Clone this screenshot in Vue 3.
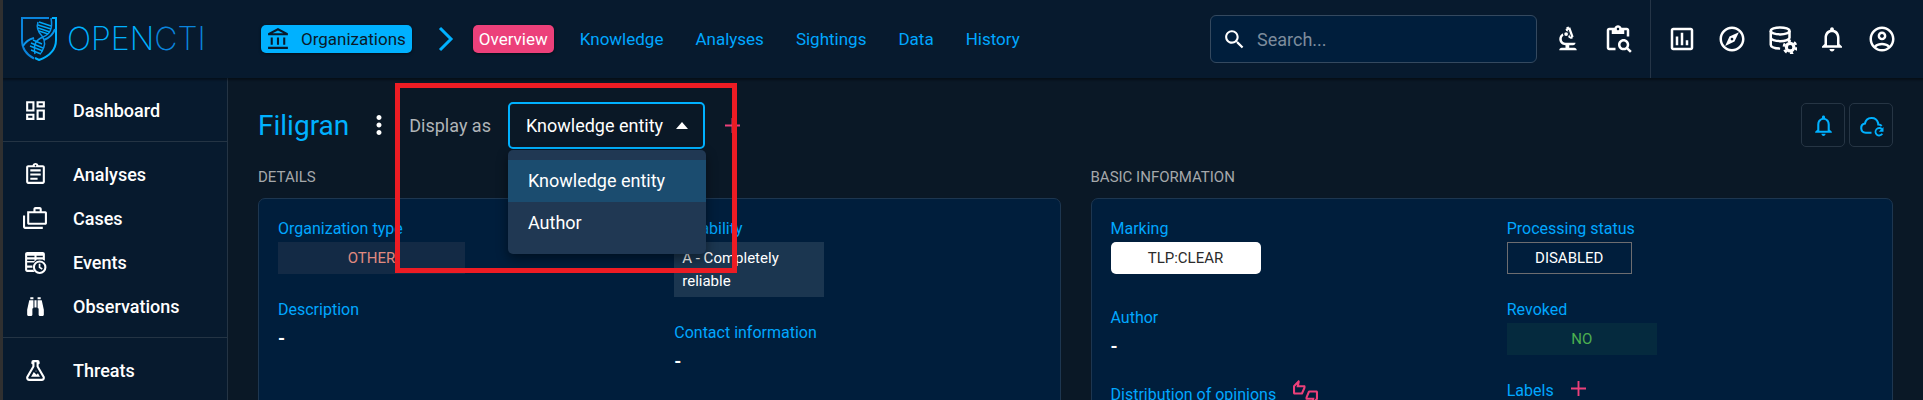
<script setup>
import { ref } from 'vue'

const tabs = ['Overview', 'Knowledge', 'Analyses', 'Sightings', 'Data', 'History']
const views = ['Knowledge entity', 'Author']
const view = ref('Knowledge entity')

const icons = {
  dashboard: 'M19 5v2h-4V5h4M9 5v6H5V5h4m10 8v6h-4v-6h4M9 17v2H5v-2h4M21 3h-8v6h8V3zM11 3H3v10h8V3zm10 8h-8v10h8V11zm-10 4H3v6h8v-6z',
  assignment: 'M7 15h7v2H7zm0-4h10v2H7zm0-4h10v2H7zm12-4h-4.18C14.4 1.84 13.3 1 12 1c-1.3 0-2.4.84-2.82 2H5c-1.1 0-2 .9-2 2v14c0 1.1.9 2 2 2h14c1.1 0 2-.9 2-2V5c0-1.1-.9-2-2-2zm-7-.25c.41 0 .75.34.75.75s-.34.75-.75.75-.75-.34-.75-.75.34-.75.75-.75zM19 19H5V5h14v14z',
  cases: 'M0 9h2v11h17v2H2c-1.1 0-2-.9-2-2V9zM21.500 5H18V3c0-1.100-.9-2-2-2h-4c-1.100 0-2 .9-2 2v2H4v11.500c0 .8.7 1.500 1.500 1.500h16c.8 0 1.500-.7 1.500-1.500v-10c0-.8-.7-1.500-1.500-1.500zM12 3h4v2h-4V3zm9 13H6V7h15v9z',
  events: 'M4 2h15c1.100 0 2 .9 2 2v6.300A7 7 0 0 0 19 9.300V9h-6v.6A7 7 0 0 0 10.500 12H4v3h5.100a7 7 0 0 0 0 2H4v2h5.700c.3.7.7 1.400 1.200 2H4c-1.100 0-2-.9-2-2V4c0-1.100.9-2 2-2zm0 3.500V7h7V5.500H4zm9 0V7h6V5.500h-6zM4 9v1.500h7V9H4zm12 1a6.500 6.500 0 1 1 0 13 6.500 6.500 0 0 1 0-13zm0 2a4.500 4.500 0 1 0 0 9 4.500 4.500 0 0 0 0-9zm-.9 1.300h1.600v3l2.200 1.300-.8 1.300-3-1.800v-3.800z',
  binoculars: 'M11 6h2v7h-2V6M9 20a1 1 0 0 1-1 1H5a1 1 0 0 1-1-1v-5L6 6h4v7a1 1 0 0 1-1 1v6M10 5H7V3h3v2M15 20v-6a1 1 0 0 1-1-1V6h4l2 9v5a1 1 0 0 1-1 1h-3a1 1 0 0 1-1-1M14 5V3h3v2h-3z',
  flask: 'M5 19a1 1 0 0 0 1 1h12a1 1 0 0 0 1-1c0-.21-.07-.41-.18-.57L13 8.350V4h-2v4.350L5.180 18.430C5.070 18.590 5 18.790 5 19m1 3a3 3 0 0 1-3-3c0-.6.18-1.160.5-1.630L9 7.810V6a1 1 0 0 1-1-1V4a2 2 0 0 1 2-2h4a2 2 0 0 1 2 2v1a1 1 0 0 1-1 1v1.810l5.500 9.560c.32.470.5 1.030.5 1.630a3 3 0 0 1-3 3H6m7-6l1.340-1.340L16.270 18H7.730l2.660-4.610L13 16m-.5-4a.5.5 0 0 1 .5.5.5.5 0 0 1-1 0 .5.5 0 0 1 .5-.5z',
  bank: 'M6.500 10h-2v7h2v-7zm6 0h-2v7h2v-7zm8.500 9H2v2h19v-2zm-2.500-9h-2v7h2v-7zm-7-6.740L16.710 6H6.290l5.210-2.740m0-2.260L2 6v2h19V6l-9.500-5z',
  search: 'M15.500 14h-.79l-.28-.27C15.410 12.590 16 11.110 16 9.500 16 5.910 13.090 3 9.500 3S3 5.910 3 9.500 5.910 16 9.500 16c1.610 0 3.090-.59 4.230-1.570l.27.28v.79l5 4.990L20.490 19l-4.990-5zm-6 0C7.010 14 5 11.990 5 9.500S7.010 5 9.500 5 14 7.010 14 9.500 11.990 14 9.500 14z',
  biotech: 'M7 19c-1.100 0-2 .9-2 2h14c0-1.100-.9-2-2-2h-4v-2h3c1.100 0 2-.9 2-2h-8c-1.660 0-3-1.340-3-3 0-1.090.590-2.040 1.460-2.560C8.170 9.030 8 8.540 8 8c0-.21.04-.42.09-.62C6.280 8.130 5 9.920 5 12c0 2.760 2.240 5 5 5v2H7zM10.560 5.510C11.910 5.540 13 6.640 13 8c0 .75-.33 1.410-.85 1.870l.59 1.620.94-.34.34.94 1.880-.68-.34-.94.94-.34-2.740-7.520-.94.34-.34-.94-1.880.68.34.94-.94.35.56 1.600zM12.500 4.600l1.900 5.200-.7.300-1.900-5.200.7-.3zM10.500 6.500a1.500 1.500 0 1 0 0 3 1.500 1.500 0 0 0 0-3z',
  pasteSearch: 'M5 5h2v3h10V5h2v5h2V5c0-1.100-.9-2-2-2h-4.180C14.400 1.840 13.300 1 12 1s-2.400.84-2.820 2H5c-1.100 0-2 .9-2 2v14c0 1.100.9 2 2 2h5v-2H5V5zm7-2c.55 0 1 .45 1 1s-.45 1-1 1-1-.45-1-1 .45-1 1-1zM20.300 18.900c.4-.7.7-1.500.7-2.400 0-2.500-2-4.500-4.500-4.500S12 14 12 16.500s2 4.500 4.500 4.500c.9 0 1.700-.3 2.400-.7l2.700 2.700 1.400-1.400-2.700-2.700zm-3.800.1c-1.400 0-2.500-1.100-2.500-2.500s1.100-2.500 2.500-2.500 2.500 1.100 2.500 2.500-1.100 2.500-2.500 2.500z',
  chart: 'M9 17H7v-7h2v7zm4 0h-2V7h2v10zm4 0h-2v-4h2v4zm2 2H5V5h14v14zm0-16H5c-1.100 0-2 .9-2 2v14c0 1.100.9 2 2 2h14c1.100 0 2-.9 2-2V5c0-1.100-.9-2-2-2z',
  explore: 'M12 2C6.480 2 2 6.480 2 12s4.480 10 10 10 10-4.480 10-10S17.520 2 12 2zm0 18c-4.410 0-8-3.590-8-8s3.590-8 8-8 8 3.590 8 8-3.590 8-8 8zm-5.500-2.500l7.510-3.490L17.500 6.500 9.990 9.990 6.500 17.500zm5.500-6.600c.61 0 1.100.49 1.100 1.100s-.49 1.100-1.100 1.100-1.100-.49-1.100-1.100.49-1.100 1.100-1.100z',
  bell: 'M12 22c1.100 0 2-.9 2-2h-4c0 1.100.9 2 2 2zm6-6v-5c0-3.070-1.630-5.640-4.500-6.320V4c0-.83-.67-1.500-1.500-1.500s-1.500.67-1.500 1.500v.68C7.640 5.360 6 7.920 6 11v5l-2 2v1h16v-1l-2-2zm-2 1H8v-6c0-2.480 1.510-4.500 4-4.500s4 2.020 4 4.500v6z',
  account: 'M12 2C6.480 2 2 6.480 2 12s4.480 10 10 10 10-4.480 10-10S17.520 2 12 2zM7.350 18.500C8.660 17.560 10.260 17 12 17s3.340.56 4.650 1.500C15.340 19.440 13.740 20 12 20s-3.340-.56-4.650-1.500zm10.790-1.380C16.450 15.800 14.320 15 12 15s-4.450.8-6.140 2.120C4.700 15.730 4 13.950 4 12c0-4.420 3.580-8 8-8s8 3.580 8 8c0 1.950-.7 3.730-1.860 5.120zM12 6c-1.930 0-3.500 1.570-3.500 3.500S10.070 13 12 13s3.500-1.570 3.500-3.500S13.930 6 12 6zm0 5c-.83 0-1.500-.67-1.500-1.500S11.170 8 12 8s1.500.67 1.500 1.500S12.830 11 12 11z',
  thumbs: 'M12 6c0-.55-.45-1-1-1H5.820l.66-3.180.02-.23c0-.31-.13-.59-.33-.8L5.380 0 .44 4.940C.17 5.210 0 5.590 0 6v6.500c0 .83.67 1.500 1.500 1.500h6.750c.62 0 1.150-.38 1.380-.91l2.260-5.290c.07-.17.11-.36.11-.55V6zm-2 1.130L7.920 12H2V6.210l1.930-1.930L3.360 7H10v.13zM22.500 10h-6.750c-.62 0-1.150.38-1.380.91l-2.260 5.290c-.07.17-.11.36-.11.55V18c0 .55.45 1 1 1h5.180l-.66 3.180-.02.24c0 .31.13.59.33.8l.79.78 4.940-4.940c.27-.27.44-.65.44-1.060v-6.500c0-.83-.67-1.500-1.500-1.500zm-.5 7.790l-1.930 1.930.57-2.720H14v-.13L16.080 12H22v5.790z',
  dots: 'M12 8c1.100 0 2-.9 2-2s-.9-2-2-2-2 .9-2 2 .9 2 2 2zm0 2c-1.100 0-2 .9-2 2s.9 2 2 2 2-.9 2-2-.9-2-2-2zm0 6c-1.100 0-2 .9-2 2s.9 2 2 2 2-.9 2-2-.9-2-2-2z'
}

const menu = [
  [{ label: 'Dashboard', icon: icons.dashboard }],
  [
    { label: 'Analyses', icon: icons.assignment },
    { label: 'Cases', icon: icons.cases },
    { label: 'Events', icon: icons.events },
    { label: 'Observations', icon: icons.binoculars }
  ],
  [{ label: 'Threats', icon: icons.flask }]
]
</script>

<template>
  <div class="app">
    <header class="topbar">
      <a class="logo" href="#" aria-label="OpenCTI home">
        <svg class="shield" viewBox="0 0 36 44" fill="none">
          <path d="M28 1H1v22c0 9 5 15 12 18.500" stroke="#0a84dc" stroke-width="2" />
          <path d="M31 1h4v22c0 9-6 16-17 20l-4-2" stroke="#00b1ff" stroke-width="2" />
          <path d="M30 1c2 11-1 16-8 19-7 3-10 7-8 17M17 5c-2 6 0 10 4 14 4 5 3 11-1 17" stroke="#0a94ea" stroke-width="1.500" />
          <path d="M34 12c-2 6-6 9-11 11M2 29c3-5 7-7 11-8" stroke="#0a94ea" stroke-width="2" />
          <path d="M18 5l12 4M17 8l13 4M17 11l12 4M18 14l9 3M12 23l9 4M10 26l12 5M9 29l13 5M10 33l10 4" stroke="#00a5f5" stroke-width="1.500" />
        </svg>
        <span class="wordmark">OPEN<span class="wordmark-end">CTI</span></span>
      </a>
      <a class="crumb" href="#">
        <svg class="icon" viewBox="0 0 24 24"><path :d="icons.bank" /></svg>
        <span>Organizations</span>
      </a>
      <svg class="chevron" viewBox="0 0 16 26" fill="none"><path d="M2 2l11 11L2 24" stroke="currentColor" stroke-width="3" /></svg>
      <nav class="tabs">
        <a v-for="(tab, i) in tabs" :key="tab" href="#" :class="{ active: i === 0 }">{{ tab }}</a>
      </nav>
      <label class="search">
        <svg class="icon" viewBox="0 0 24 24"><path :d="icons.search" /></svg>
        <input type="text" placeholder="Search..." aria-label="Search" />
      </label>
      <div class="tools">
        <button aria-label="Advanced search"><svg class="icon" viewBox="0 0 24 24"><path fill-rule="evenodd" :d="icons.biotech" /></svg></button>
        <button aria-label="Bulk search"><svg class="icon" viewBox="0 0 24 24"><path :d="icons.pasteSearch" /></svg></button>
      </div>
      <div class="tools account-tools">
        <button aria-label="Dashboards"><svg class="icon" viewBox="0 0 24 24"><path :d="icons.chart" /></svg></button>
        <button aria-label="Investigations"><svg class="icon" viewBox="0 0 24 24"><path :d="icons.explore" /></svg></button>
        <button aria-label="Data">
          <svg class="icon" viewBox="0 0 24 24">
            <g fill="none" stroke="currentColor" stroke-width="2">
              <ellipse cx="10.500" cy="5.500" rx="7.500" ry="2.800" />
              <path d="M3 5.500v11c0 1.700 3 2.900 7.500 3.200M18 5.500v6M3 10.800c0 1.700 3.400 2.900 7.500 2.900 3.500 0 6.500-.8 7.500-2.300M3 15.500" />
            </g>
            <circle cx="18.500" cy="18.500" r="3" fill="none" stroke="currentColor" stroke-width="2.500" />
            <circle cx="18.500" cy="18.500" r="5" fill="none" stroke="currentColor" stroke-width="2" stroke-dasharray="2.600 2.636" />
          </svg>
        </button>
        <button aria-label="Notifications"><svg class="icon" viewBox="0 0 24 24"><path :d="icons.bell" /></svg></button>
        <button aria-label="Profile"><svg class="icon" viewBox="0 0 24 24"><path :d="icons.account" /></svg></button>
      </div>
    </header>

    <div class="body">
      <nav class="sidebar">
        <ul v-for="(group, i) in menu" :key="i">
          <li v-for="item in group" :key="item.label">
            <a href="#">
              <svg class="icon" viewBox="0 0 24 24"><path fill-rule="evenodd" :d="item.icon" /></svg>
              <span>{{ item.label }}</span>
            </a>
          </li>
        </ul>
      </nav>

      <main class="main">
        <div class="title-row">
          <h1>Filigran</h1>
          <button class="more" aria-label="More"><svg class="icon" viewBox="0 0 24 24"><path :d="icons.dots" /></svg></button>
          <label class="display-label" for="display-as">Display as</label>
          <div class="picker">
            <select id="display-as" v-model="view">
              <option v-for="v in views" :key="v">{{ v }}</option>
            </select>
            <svg class="caret" viewBox="0 0 12 7"><path d="M0 7l6-7 6 7z" /></svg>
            <ul class="options" role="listbox" aria-label="Display as">
              <li v-for="v in views" :key="v" role="option" :aria-selected="v === view" :class="{ selected: v === view }" @click="view = v">{{ v }}</li>
            </ul>
          </div>
          <button class="add" aria-label="Add"><svg viewBox="0 0 16 16"><path d="M8 0v16M0 8h16" /></svg></button>
          <div class="actions">
            <button aria-label="Subscribe"><svg class="icon" viewBox="0 0 24 24"><path :d="icons.bell" /></svg></button>
            <button aria-label="Enrichment">
              <svg class="icon" viewBox="0 0 24 24" fill="none">
                <path d="M12 19H6.500a4.500 4.500 0 0 1-.8-8.900A6.500 6.500 0 0 1 18.300 9.500c.1.800.2 1.500.2 1.500 1.500.1 2.500.6 3.300 1.500" stroke="currentColor" stroke-width="2" />
                <path d="M22 15.500A3.600 3.600 0 1 0 22.400 20" stroke="currentColor" stroke-width="1.700" />
                <path d="M23.500 13.500v4.500H19z" fill="currentColor" />
              </svg>
            </button>
          </div>
        </div>

        <div class="cards">
          <section>
            <h2>DETAILS</h2>
            <div class="card">
              <div class="column">
                <div class="field"><h3>Organization type</h3><span class="chip other">OTHER</span></div>
                <div class="field"><h3>Description</h3><p>-</p></div>
              </div>
              <div class="column">
                <div class="field"><h3>Reliability</h3><span class="chip reliability">A - Completely reliable</span></div>
                <div class="field"><h3>Contact information</h3><p>-</p></div>
              </div>
            </div>
          </section>
          <section>
            <h2>BASIC INFORMATION</h2>
            <div class="card">
              <div class="column">
                <div class="field"><h3>Marking</h3><span class="chip marking">TLP:CLEAR</span></div>
                <div class="field"><h3>Author</h3><p>-</p></div>
                <div class="field with-action">
                  <h3>Distribution of opinions</h3>
                  <button aria-label="Give an opinion"><svg class="icon" viewBox="0 0 24 24"><path :d="icons.thumbs" /></svg></button>
                </div>
              </div>
              <div class="column">
                <div class="field"><h3>Processing status</h3><span class="chip disabled">DISABLED</span></div>
                <div class="field"><h3>Revoked</h3><span class="chip no">NO</span></div>
                <div class="field with-action">
                  <h3>Labels</h3>
                  <button class="add" aria-label="Add label"><svg viewBox="0 0 16 16"><path d="M8 0v16M0 8h16" /></svg></button>
                </div>
              </div>
            </div>
          </section>
        </div>
        <div class="highlight" aria-hidden="true"></div>
      </main>
    </div>
  </div>
</template>

<style>
body {
  margin: 0;
  background: #0a1826;
}
</style>

<style scoped>
* {
  box-sizing: border-box;
}
.app {
  display: flex;
  flex-direction: column;
  height: 100vh;
  overflow: hidden;
  border-left: 3px solid #303030;
  background: #0a1826;
  color: #fff;
  font-family: Roboto, "Liberation Sans", sans-serif;
  font-size: 18px;
}
a {
  color: inherit;
  text-decoration: none;
}
ul, h1, h2, h3, p {
  margin: 0;
  padding: 0;
  font-weight: 400;
  list-style: none;
}
button {
  display: flex;
  align-items: center;
  justify-content: center;
  padding: 0;
  border: 0;
  background: none;
  color: inherit;
  font: inherit;
}
.icon {
  flex: none;
  width: 25px;
  height: 25px;
  fill: currentColor;
}
svg[fill="none"] {
  fill: none;
}

.topbar {
  position: relative;
  display: flex;
  flex: none;
  align-items: center;
  height: 78px;
  background: #071a2e;
  box-shadow: 0 1px 2px 1px rgba(0, 0, 0, 0.4);
}
.logo {
  display: flex;
  align-items: center;
  gap: 10px;
  width: 240px;
  padding-left: 18px;
}
.shield {
  width: 36px;
  height: 44px;
}
.wordmark {
  color: #00b1ff;
  font-family: Inter, sans-serif;
  font-size: 32px;
  font-weight: 200;
  line-height: 44px;
}
.wordmark-end {
  color: #0a84dc;
}
.crumb {
  display: flex;
  align-items: center;
  gap: 10px;
  height: 28px;
  margin-left: 18px;
  padding: 0 6px 0 5px;
  border-radius: 5px;
  background: #00b1ff;
  box-shadow: 0 1px 3px rgba(0, 0, 0, 0.5);
  color: #0a1929;
  font-size: 17px;
}
.chevron {
  flex: none;
  width: 16px;
  height: 26px;
  margin: 0 19px 0 26px;
  color: #00b1ff;
}
.tabs {
  display: flex;
  align-items: center;
  gap: 20px;
  color: #00a7ff;
  font-size: 17px;
}
.tabs a {
  padding: 0 6px;
  line-height: 28px;
}
.tabs a.active {
  border-radius: 5px;
  background: #ec407a;
  box-shadow: 0 1px 3px rgba(0, 0, 0, 0.5);
  color: #fff;
}
.search {
  display: flex;
  align-items: center;
  gap: 10px;
  width: 327px;
  height: 48px;
  margin-left: auto;
  padding-left: 11px;
  border: 1px solid #34495f;
  border-radius: 6px;
  background: #001e3c;
}
.search input {
  flex: 1;
  min-width: 0;
  padding: 0;
  border: 0;
  outline: 0;
  background: none;
  color: #fff;
  font: inherit;
}
.search input::placeholder {
  color: #7d8c9c;
  opacity: 1;
}
.tools {
  display: flex;
  align-items: center;
  gap: 20px;
  padding: 0 17px 0 16px;
}
.tools .icon {
  width: 30px;
  height: 30px;
}
.account-tools {
  align-self: stretch;
  padding-right: 26px;
  border-left: 1px solid #253547;
}

.body {
  display: flex;
  flex: 1;
  min-height: 0;
}
.sidebar {
  flex: none;
  width: 225px;
  border-right: 1px solid #243444;
  background: #071a2e;
}
.sidebar ul {
  padding: 10px 0 9px;
  border-bottom: 1px solid #243444;
}
.sidebar a {
  display: flex;
  align-items: center;
  gap: 25px;
  height: 44px;
  padding-left: 20px;
  font-weight: 500;
}
.main {
  position: relative;
  flex: 1;
  min-width: 0;
  padding: 22px 30px 0;
}
.title-row {
  display: flex;
  align-items: center;
  height: 50px;
}
.title-row h1 {
  color: #00b1ff;
  font-size: 28px;
}
.more {
  width: 40px;
  margin-left: 10px;
}
.more .icon {
  width: 30px;
  height: 30px;
}
.display-label {
  margin-left: 10px;
  color: #b0b4b8;
}
.picker {
  position: relative;
  width: 197px;
  margin-left: 17px;
}
.picker select {
  display: block;
  width: 100%;
  height: 47px;
  padding: 0 16px;
  border: 2px solid #00b1ff;
  border-radius: 5px;
  outline: 0;
  appearance: none;
  background: none;
  color: #fff;
  font: inherit;
}
.caret {
  position: absolute;
  top: 20px;
  right: 17px;
  width: 12px;
  height: 7px;
  fill: #fff;
  pointer-events: none;
}
.options {
  position: absolute;
  z-index: 2;
  top: 48px;
  left: 0;
  width: 198px;
  padding: 10px 0;
  border-radius: 5px;
  background: #203853;
  box-shadow: 0 5px 12px rgba(0, 0, 0, 0.45);
}
.options li {
  padding: 0 20px;
  line-height: 42px;
}
.options .selected {
  background: #1b4c6f;
}
.add {
  color: #ec407a;
}
.title-row .add {
  margin-left: 20px;
}
.add svg {
  width: 15px;
  height: 15px;
  fill: none;
  stroke: currentColor;
  stroke-width: 2;
}
.actions {
  display: flex;
  gap: 4px;
  margin-left: auto;
}
.actions button {
  width: 44px;
  height: 44px;
  border: 1px solid #263544;
  border-radius: 5px;
  color: #00b1ff;
}

.cards {
  display: grid;
  grid-template-columns: 1fr 1fr;
  gap: 30px;
  margin-top: 16px;
}
.cards h2 {
  color: #a5a8ab;
  font-size: 15px;
  line-height: 22px;
}
.card {
  display: grid;
  grid-template-columns: 1fr 1fr;
  gap: 30px;
  min-height: 300px;
  margin-top: 10px;
  padding: 20px 19px;
  border: 1px solid #1d3650;
  border-radius: 7px;
  background: #001e3c;
}
.column {
  display: flex;
  flex-direction: column;
  gap: 26px;
}
.field h3 {
  margin-bottom: 3px;
  color: #00a7ff;
  font-size: 16px;
  line-height: 20px;
}
.field p {
  padding-top: 4px;
  font-weight: 700;
  line-height: 24px;
}
.chip {
  display: block;
  width: 150px;
  font-size: 15px;
  line-height: 32px;
  text-align: center;
}
.other {
  width: 187px;
  background: #132a45;
  color: #e08a80;
}
.reliability {
  padding: 5px 8px 4px;
  background: #1b3650;
  line-height: 23px;
  text-align: left;
}
.marking {
  margin-bottom: 8px;
  border-radius: 5px;
  background: #fff;
  color: #2b2b2b;
}
.disabled {
  width: 125px;
  border: 1px solid #6d6d70;
  line-height: 30px;
}
.no {
  background: #052a3e;
  color: #4caf50;
}
.with-action {
  display: flex;
  align-items: flex-start;
  gap: 17px;
}
.with-action button {
  height: 15px;
  color: #ec407a;
}
.highlight {
  position: absolute;
  z-index: 3;
  top: 5px;
  left: 167px;
  width: 342px;
  height: 190px;
  border: 5px solid #ed1c24;
  pointer-events: none;
}
</style>
